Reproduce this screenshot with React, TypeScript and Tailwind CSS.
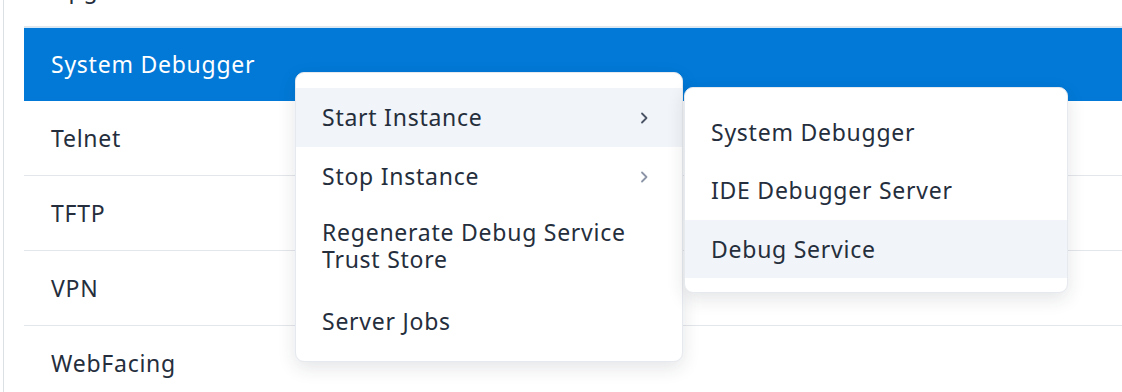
const rows = ["Upgrade", "System Debugger", "Telnet", "TFTP", "VPN", "WebFacing"];

const Chevron = ({ muted }: { muted?: boolean }) => (
  <svg
    className="w-[8px] h-[12px]"
    viewBox="0 0 8 12"
    fill="none"
    stroke={muted ? "#8b95a7" : "#4a5365"}
    strokeWidth="1.8"
    strokeLinecap="round"
    strokeLinejoin="round"
  >
    <path d="M2 1.5l4.5 4.5L2 10.5" />
  </svg>
);

export default function App() {
  return (
    <div
      className="relative w-[1122px] h-[392px] overflow-hidden bg-white text-[23px] tracking-[0.75px] text-[#252e3c]"
      style={{ fontFamily: '"Noto Sans", "Open Sans", sans-serif' }}
    >
      <div className="ml-[3px] h-full flex flex-col border-l border-[#dcdfe4] pl-[20px]">
        <div className="-mt-[48px]">
          {rows.map((row) =>
            row === "System Debugger" ? (
              <div
                key={row}
                className="h-[74px] flex items-center pl-[27px] bg-[#0279d7] text-white border-t border-[#d7e8f6]"
              >
                {row}
              </div>
            ) : (
              <div
                key={row}
                className="h-[75px] flex items-center pl-[27px] border-b border-[#e3e6eb]"
              >
                {row}
              </div>
            )
          )}
        </div>
      </div>

      {/* context menu */}
      <div className="absolute left-[295px] top-[72px] w-[388px] pt-[15px] pb-[10px] bg-white rounded-[9px] border border-[#e6e9ee] shadow-[0_6px_18px_rgba(30,40,60,0.12)]">
        <div className="h-[59px] flex items-center justify-between pl-[26px] pr-[34px] bg-[#f1f4f8]">
          <span>Start Instance</span>
          <Chevron />
        </div>
        <div className="h-[59px] flex items-center justify-between pl-[26px] pr-[34px]">
          <span>Stop Instance</span>
          <Chevron muted />
        </div>
        <div className="h-[85px] flex items-center pl-[26px] pr-[20px] pb-[6px] leading-[27px]">
          Regenerate Debug Service
          <br />
          Trust Store
        </div>
        <div className="h-[60px] flex items-center pl-[26px]">Server Jobs</div>
      </div>

      {/* submenu */}
      <div className="absolute left-[684px] top-[87px] w-[384px] pt-[15px] pb-[14px] bg-white rounded-[9px] border border-[#e6e9ee] shadow-[0_6px_18px_rgba(30,40,60,0.12)]">
        <div className="h-[58px] flex items-center pl-[26px]">System Debugger</div>
        <div className="h-[59px] flex items-center pl-[26px]">IDE Debugger Server</div>
        <div className="h-[58px] flex items-center pl-[26px] bg-[#f1f4f8]">Debug Service</div>
      </div>
    </div>
  );
}
